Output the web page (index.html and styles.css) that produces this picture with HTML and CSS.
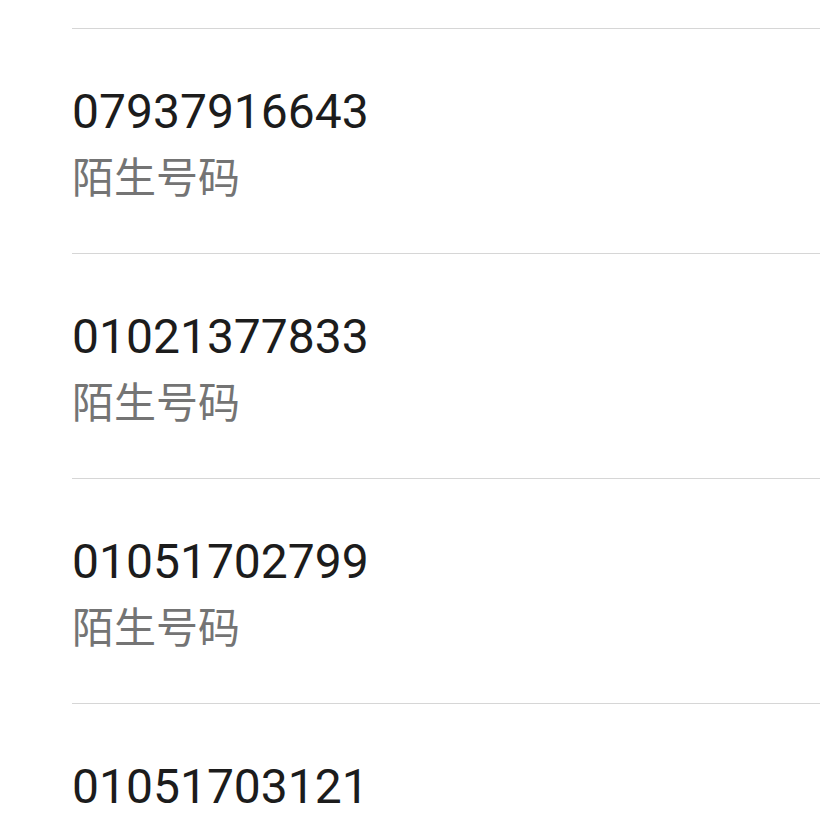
FILE: index.html
```html
<!DOCTYPE html>
<html lang="zh-CN">
<head>
    <meta charset="UTF-8">
    <meta name="viewport" content="width=device-width, initial-scale=1.0">
    <title>通话记录</title>
    <link rel="stylesheet" href="styles.css">
</head>
<body>

    <!-- 通话记录列表 -->
    <ul class="call-list">
        <li class="call-item">
            <div class="call-number">07937916643</div>
            <div class="call-label">陌生号码</div>
        </li>
        <li class="call-item">
            <div class="call-number">01021377833</div>
            <div class="call-label">陌生号码</div>
        </li>
        <li class="call-item">
            <div class="call-number">01051702799</div>
            <div class="call-label">陌生号码</div>
        </li>
        <li class="call-item">
            <div class="call-number">01051703121</div>
        </li>
    </ul>

</body>
</html>
```

FILE: styles.css
```css
body, html {
    height: 100%;
    margin: 0;
    overflow: hidden;
    background-color: #ffffff;
}

.call-list {
    list-style: none;
    margin: 0;
    padding: 28px 0 0 72px; /* 上一条记录在屏幕外 */
    display: flex;
    flex-direction: column;
}

.call-item {
    box-sizing: border-box;
    height: 225px;
    padding-top: 54px;
    border-top: 1px solid #d6d6d6;
    flex-shrink: 0;
}

.call-number {
    font-family: Roboto, "Noto Sans CJK SC", sans-serif;
    font-size: 48px;
    line-height: 58px;
    color: #1c1c1c;
}

.call-label {
    margin-top: 6px;
    font-family: "Noto Sans CJK SC", sans-serif;
    font-size: 42px;
    line-height: 56px;
    color: #747474;
}
```
